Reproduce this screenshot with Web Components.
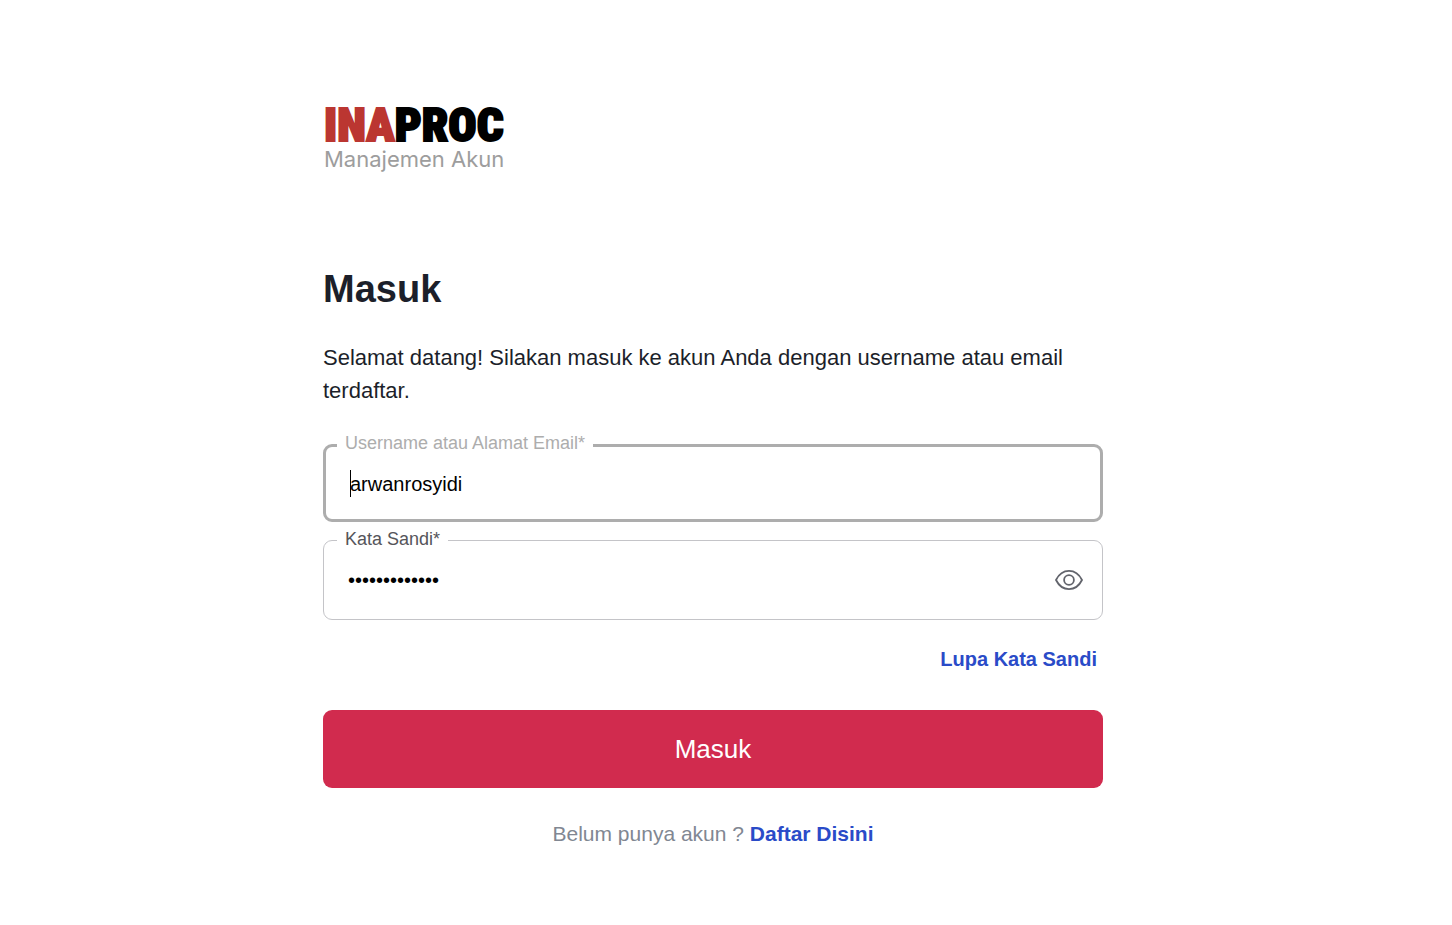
<!DOCTYPE html>
<html lang="id">
<head>
<meta charset="utf-8">
<meta name="viewport" content="width=device-width, initial-scale=1">
<title>Masuk - INAPROC</title>
<style>
    body {
        margin: 0;
        background: #fff;
        color: #1c1f2a;
        font-family: "Liberation Sans", Arial, sans-serif;
    }
</style>
</head>
<body>
<login-page>
    <brand-logo slot="logo"></brand-logo>
    <login-form></login-form>
</login-page>

<script>
class BaseElement extends HTMLElement {
    constructor() {
        super();
        this.attachShadow({ mode: 'open' });
    }

    connectedCallback() {
        const template = document.createElement('template');
        template.innerHTML = `<style>* { box-sizing: border-box; }${this.constructor.style}</style>${this.html}`;
        this.shadowRoot.innerHTML = '';
        this.shadowRoot.appendChild(template.content.cloneNode(true));
    }
}

class LoginPage extends BaseElement {
    get html() {
        return `
            <main>
                <header><slot name="logo"></slot></header>
                <slot></slot>
            </main>
        `;
    }

    static get style() {
        return `
            :host {
                display: flex;
                justify-content: center;
                padding: 102px 50px 72px 24px;
            }

            main {
                display: flex;
                flex-direction: column;
                gap: 95px;
                width: 100%;
                max-width: 780px;
            }
        `;
    }
}

class BrandLogo extends BaseElement {
    get html() {
        return `
            <div class="name"><span>INA</span>PROC</div>
            <div class="product">Manajemen Akun</div>
        `;
    }

    static get style() {
        return `
            :host {
                display: block;
                padding-left: 1px;
            }

            .name {
                color: #000;
                font: 900 47px/46px "Roboto Condensed", sans-serif;
                -webkit-text-stroke: 2px currentColor;
            }

            .name span {
                color: #bb3631;
            }

            .product {
                color: #9d9d9d;
                font: 22px/22px Inter, sans-serif;
            }
        `;
    }
}

class TextField extends BaseElement {
    get html() {
        const type = this.getAttribute('type') || 'text';
        return `
            <fieldset>
                <legend><label for="input">${this.getAttribute('label')}*</label></legend>
                <div class="row">
                    <input id="input" type="${type}" value="${this.getAttribute('value')}" required>
                    <slot name="action"></slot>
                </div>
            </fieldset>
        `;
    }

    static get style() {
        return `
            :host {
                display: block;
                --line: #c4c4c8;
                --line-width: 1px;
                --label: #55555a;
            }

            :host([active]) {
                --line: #adadad;
                --line-width: 3px;
                --label: #adadad;
            }

            fieldset {
                min-width: 0;
                margin: 0;
                padding: 0 19px 0 24px;
                border: var(--line-width) solid var(--line);
                border-radius: 9px;
            }

            legend {
                margin-left: -11px;
                padding: 0 8px 2px;
                color: var(--label);
                font-size: 18px;
                line-height: 20px;
            }

            :host([active]) legend {
                margin-left: -13px;
                padding-bottom: 4px;
            }

            .row {
                display: flex;
                align-items: center;
                height: 58px;
                margin-bottom: 10px;
            }

            :host([active]) .row {
                height: 54px;
                margin-bottom: 8px;
            }

            input {
                flex: 1;
                min-width: 0;
                height: 28px;
                padding: 0;
                border: 0;
                outline: 0;
                background: none;
                color: #000;
                font: 20px/28px "Liberation Sans", Arial, sans-serif;
            }

            :host([active]) input {
                caret-color: transparent;
                background: linear-gradient(#000, #000) 0 0 / 1px 27px no-repeat;
            }
        `;
    }
}

class RevealButton extends BaseElement {
    get html() {
        return `
            <button type="button" aria-label="Tampilkan kata sandi">
                <svg width="28" height="22" viewBox="0 0 28 22" fill="none" stroke="#62646c" stroke-width="1.8">
                    <path d="M1 11C4 5 8.500 1.900 14 1.900S24 5 27 11C24 17 19.500 20.100 14 20.100S4 17 1 11Z" stroke-linejoin="round"/>
                    <circle cx="14" cy="11" r="4.900"/>
                </svg>
            </button>
        `;
    }

    static get style() {
        return `
            :host {
                display: block;
            }

            button {
                display: block;
                padding: 0;
                border: 0;
                background: none;
                cursor: pointer;
            }

            svg {
                display: block;
            }
        `;
    }
}

class LoginForm extends BaseElement {
    get html() {
        return `
            <h1>Masuk</h1>
            <p class="intro">Selamat datang! Silakan masuk ke akun Anda dengan username atau email terdaftar.</p>
            <form>
                <text-field active label="Username atau Alamat Email" value="arwanrosyidi"></text-field>
                <text-field type="password" label="Kata Sandi" value="rahasia123456">
                    <reveal-button slot="action"></reveal-button>
                </text-field>
                <a class="forgot" href="#lupa">Lupa Kata Sandi</a>
                <button type="submit">Masuk</button>
            </form>
            <p class="register">Belum punya akun ? <a href="#daftar">Daftar Disini</a></p>
        `;
    }

    static get style() {
        return `
            :host {
                display: block;
            }

            h1 {
                margin: 0 0 28px;
                font-size: 38px;
                line-height: 48px;
            }

            p {
                margin: 0;
            }

            .intro {
                margin-bottom: 26px;
                font-size: 22px;
                line-height: 33px;
            }

            form {
                display: flex;
                flex-direction: column;
            }

            text-field + text-field {
                margin-top: 7px;
            }

            a {
                color: #2a4bc8;
                font-weight: bold;
                text-decoration: none;
            }

            .forgot {
                align-self: flex-end;
                margin: 24px 6px 36px 0;
                font-size: 20px;
                line-height: 30px;
            }

            button {
                height: 78px;
                padding: 0;
                border: 0;
                border-radius: 9px;
                background: #d12b4e;
                color: #fff;
                font: 26px/36px "Liberation Sans", Arial, sans-serif;
                cursor: pointer;
            }

            .register {
                margin-top: 30px;
                color: #818792;
                font-size: 21px;
                line-height: 32px;
                text-align: center;
            }
        `;
    }
}

customElements.define('login-page', LoginPage);
customElements.define('brand-logo', BrandLogo);
customElements.define('text-field', TextField);
customElements.define('reveal-button', RevealButton);
customElements.define('login-form', LoginForm);
</script>
</body>
</html>
